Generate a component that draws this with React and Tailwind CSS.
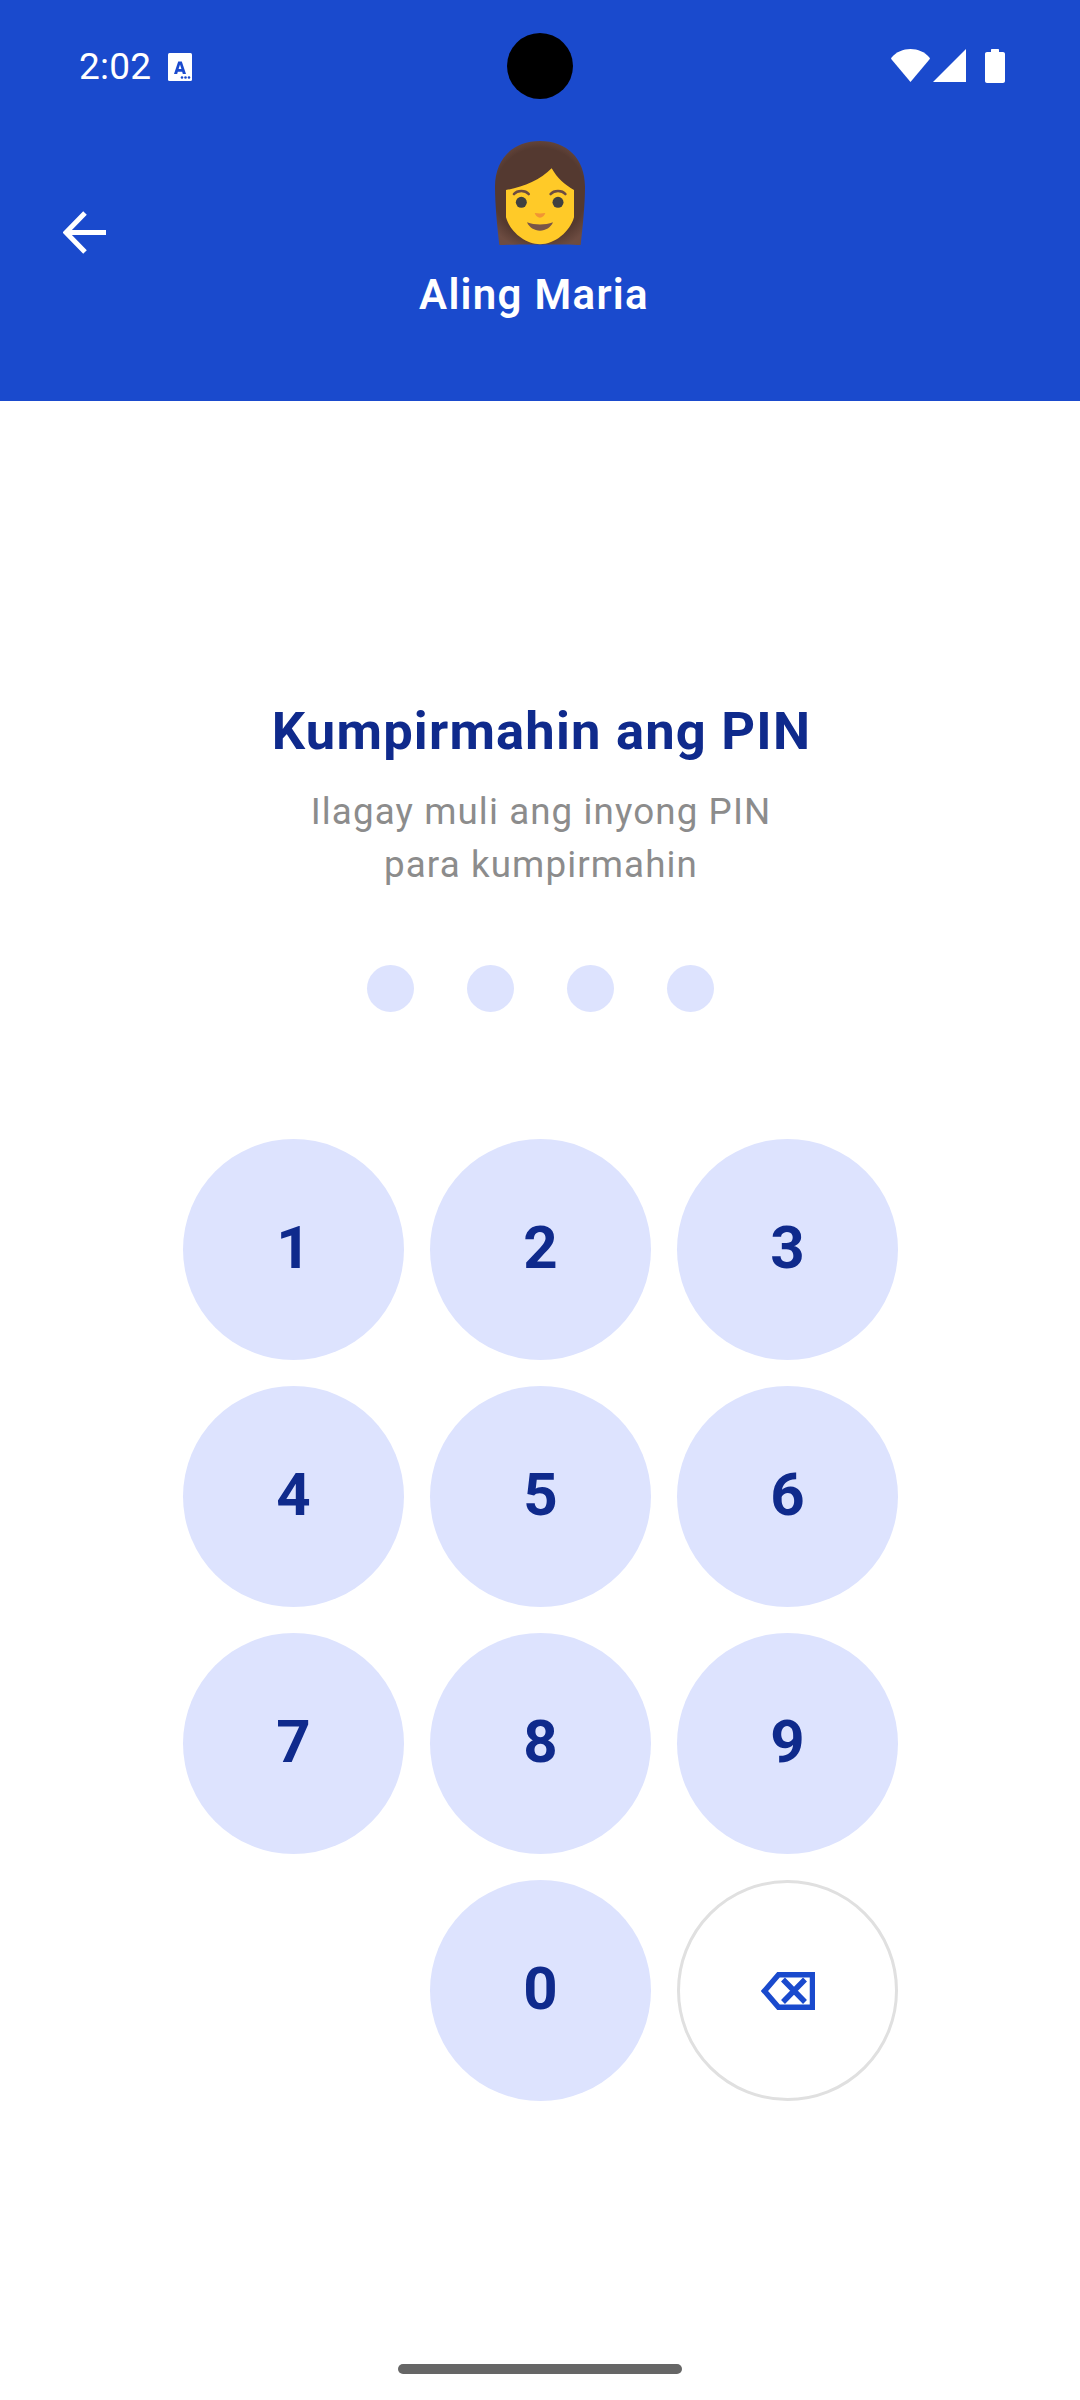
import React from "react";

const keys = ["1", "2", "3", "4", "5", "6", "7", "8", "9"];

function Emoji() {
  return (
    <svg width="90" height="104" viewBox="105 33 270 312" className="block">
      <defs>
        <radialGradient id="hair" cx="240" cy="190" r="175" gradientUnits="userSpaceOnUse">
          <stop offset="0.78" stopColor="#543930" />
          <stop offset="1" stopColor="#6D4C41" />
        </radialGradient>
      </defs>
      <path d="M118 345C112 290 105 225 105 170C105 85 160 33 240 33C320 33 375 85 375 170C375 225 368 290 362 345C320 343 160 343 118 345Z" fill="url(#hair)" />
      <path d="M138 180C190 172 240 150 275 115C292 145 315 165 342 180L342 262C330 305 285 343 240 343C195 343 150 305 138 262Z" fill="#FFCA28" />
      <circle cx="184" cy="217" r="16.5" fill="#404040" />
      <circle cx="294" cy="217" r="16.5" fill="#404040" />
      <path d="M162 192C172 180 196 180 206 192" stroke="#6D4C41" strokeWidth="8" fill="none" strokeLinecap="round" />
      <path d="M272 192C282 180 306 180 316 192" stroke="#6D4C41" strokeWidth="8" fill="none" strokeLinecap="round" />
      <path d="M224 249C234 251 246 251 256 249C254 257 247 263 240 263C233 263 226 257 224 249Z" fill="#F19534" />
      <path d="M201 277C225 286 255 286 279 277C272 293 257 302 240 302C223 302 208 293 201 277Z" fill="#795548" />
    </svg>
  );
}

function StatusIcons() {
  return (
    <div className="flex items-start">
      <svg width="39" height="33" viewBox="0 0 39 33" className="block">
        <path d="M.6 8.400C5.500 2.900 12 0 19.500 0C27 0 33.500 2.900 38.400 8.400C39 9.100 39 9.700 38.600 10.300L19.500 33L.4 10.300C0 9.700 0 9.100.6 8.400Z" fill="#fff" />
      </svg>
      <svg width="33" height="33" viewBox="0 0 33 33" className="ml-[3px] block">
        <path d="M33 0V33H0Z" fill="#fff" />
      </svg>
      <svg width="20" height="34" viewBox="0 0 20 34" className="ml-[19px] block">
        <path d="M6 3V1C6 .4 6.400 0 7 0H13C13.600 0 14 .4 14 1V3H18C19.100 3 20 3.900 20 5V32C20 33.100 19.100 34 18 34H2C.9 34 0 33.100 0 32V5C0 3.900 .9 3 2 3Z" fill="#fff" />
      </svg>
    </div>
  );
}

function Key({ label }) {
  return (
    <div className="flex h-[221px] w-[221px] items-center justify-center rounded-full bg-[#dde3fe] pb-[3px] pl-[1px] text-[60px] font-bold leading-none text-[#0f2a8c]">
      {label}
    </div>
  );
}

export default function App() {
  return (
    <div className="relative flex h-[2400px] w-[1080px] flex-col overflow-hidden bg-white font-['Roboto',sans-serif]">
      <div className="absolute left-[507px] top-[33px] h-[66px] w-[66px] rounded-full bg-black" />

      <header className="flex h-[401px] flex-col bg-[#1a4acd] text-white">
        <div className="flex h-[131px] items-start justify-between pl-[79px] pr-[75px] pt-[49px]">
          <div className="flex items-center">
            <span className="text-[37px] leading-[36px] tracking-[0.2px]">2:02</span>
            <svg width="24" height="28" viewBox="0 0 24 28" className="ml-[17px] block">
              <rect width="24" height="28" rx="1.500" fill="#fff" />
              <path d="M6 21L10.200 8.500H13.800L18 21H14.800L14.200 18.800H9.800L9.200 21ZM10.600 16H13.400L12 11.500Z" fill="#1a4acd" fillRule="evenodd" />
              <circle cx="14" cy="24.500" r="1.300" fill="#1a4acd" />
              <circle cx="17.500" cy="24.500" r="1.300" fill="#1a4acd" />
              <circle cx="21" cy="24.500" r="1.300" fill="#1a4acd" />
            </svg>
          </div>
          <StatusIcons />
        </div>
        <div className="relative flex flex-col items-center pt-[10px]">
          <Emoji />
          <svg width="43" height="43" viewBox="0 0 43 43" fill="none" stroke="#fff" strokeWidth="5" className="absolute left-[63px] top-[80px]">
            <path d="M43 21.500H5M22 2L3 21.500L22 41" />
          </svg>
          <div className="mt-[25px] pr-[12px] text-[42px] font-semibold leading-[49px] tracking-[1.3px]">Aling Maria</div>
        </div>
      </header>

      <main className="flex flex-1 flex-col items-center">
        <h1 className="mt-[299px] pl-[3px] text-[52.5px] font-bold leading-[62px] tracking-[1.2px] text-[#0f2a8c]">Kumpirmahin ang PIN</h1>
        <p className="mt-[23px] pl-[2px] text-center text-[36.75px] leading-[53px] tracking-[1.1px] text-[#8c8c8c]">
          Ilagay muli ang inyong PIN
          <br />
          para kumpirmahin
        </p>
        <div className="mt-[74px] flex gap-[53px]">
          <div className="h-[47px] w-[47px] rounded-full bg-[#dde3fe]" />
          <div className="h-[47px] w-[47px] rounded-full bg-[#dde3fe]" />
          <div className="h-[47px] w-[47px] rounded-full bg-[#dde3fe]" />
          <div className="h-[47px] w-[47px] rounded-full bg-[#dde3fe]" />
        </div>
        <div className="mt-[127px] grid grid-cols-[221px_221px_221px] gap-[26px]">
          {keys.map((k) => (
            <Key key={k} label={k} />
          ))}
          <div />
          <Key label="0" />
          <div className="flex h-[221px] w-[221px] items-center justify-center rounded-full border-[3px] border-[#e0e0e0]">
            <svg width="54" height="38" viewBox="0 0 54 38" fill="none" stroke="#1a4acd" strokeWidth="5.500" className="ml-[2px]">
              <path d="M51.500 2.750V35.250H17.500L3.500 19L17.500 2.750Z" />
              <path d="M22 7.500L44 30M44 7.500L22 30" />
            </svg>
          </div>
        </div>
      </main>

      <div className="absolute bottom-[26px] left-[398px] h-[10px] w-[284px] rounded-full bg-[#666666]" />
    </div>
  );
}
